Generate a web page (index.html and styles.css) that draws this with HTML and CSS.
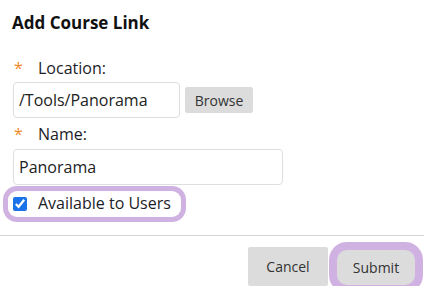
FILE: index.html
```html
<!DOCTYPE html>
<html lang="en">
	<head>
		<meta charset="UTF-8" />
		<meta name="viewport" content="width=device-width, initial-scale=1.0" />
		<title>Add Course Link</title>
		<link rel="stylesheet" href="styles.css">
	</head>
	<body>
		<form class="dialog">
			<div class="dialog-body">
				<h1 class="dialog-title">Add Course Link</h1>
				<label class="field-label">
					<span class="required">*</span>Location:
				</label>
				<div class="field-row">
					<input class="text-input location-input" type="text" value="/Tools/Panorama" />
					<button type="button" class="browse-btn">Browse</button>
				</div>
				<label class="field-label name-label">
					<span class="required">*</span>Name:
				</label>
				<input class="text-input name-input" type="text" value="Panorama" />
				<label class="check-row">
					<input type="checkbox" checked />
					<span>Available to Users</span>
				</label>
			</div>
			<div class="dialog-footer">
				<button type="button" class="btn">Cancel</button>
				<button type="submit" class="btn btn-focus">Submit</button>
			</div>
		</form>
	</body>
</html>
```

FILE: styles.css
```css
* {
	box-sizing: border-box;
}
body {
	font-family: "Open Sans", "Liberation Sans", sans-serif;
	margin: 0;
	background: #fff;
	color: #1c1c28;
}
.dialog-body {
	padding: 12px 0 0 13px;
}
.dialog-title {
	font-size: 17px;
	font-weight: 700;
	line-height: 22px;
	margin: 0 0 23px -1px;
	color: #111;
}
.field-label {
	display: block;
	font-size: 16px;
	line-height: 22px;
}
.required {
	display: inline-block;
	width: 25px;
	padding-left: 1px;
	color: #f0892a;
}
.field-row {
	display: flex;
	align-items: center;
	gap: 5px;
	margin-top: 3px;
}
.text-input {
	font-family: inherit;
	font-size: 16px;
	color: #222;
	height: 36px;
	padding: 0 6px 0 5px;
	border: 1px solid #dedede;
	border-radius: 4px;
	outline: none;
}
.location-input {
	width: 167px;
}
.name-label {
	margin-top: 5px;
}
.name-input {
	display: block;
	width: 270px;
	margin-top: 4px;
}
.browse-btn {
	font-family: inherit;
	font-size: 14px;
	color: #333;
	height: 26px;
	width: 68px;
	border: none;
	border-radius: 2px;
	background: #dcdcdc;
	padding: 0;
}
.check-row {
	display: inline-flex;
	align-items: center;
	gap: 11px;
	margin: 6px 0 0 -5px;
	padding: 2px 10px 3px 5px;
	font-size: 16px;
	line-height: 21px;
	border-radius: 9px;
	box-shadow: 0 0 0 5px #d0b2e2;
}
.check-row input {
	width: 14px;
	height: 14px;
	margin: 0;
	accent-color: #1a73e8;
}
.dialog-footer {
	display: flex;
	justify-content: flex-end;
	align-items: center;
	gap: 9px;
	margin-top: 18px;
	padding: 11px 9px 0 0;
	border-top: 1px solid #d4d4d4;
}
.btn {
	font-family: inherit;
	font-size: 14px;
	color: #333;
	width: 80px;
	height: 39px;
	border: none;
	border-radius: 2px;
	background: #dcdcdc;
}
.btn-focus {
	width: 78px;
	height: 35px;
	margin-top: 2px;
	border-radius: 10px;
	box-shadow: 0 0 0 8px #d0b2e2;
}
```
